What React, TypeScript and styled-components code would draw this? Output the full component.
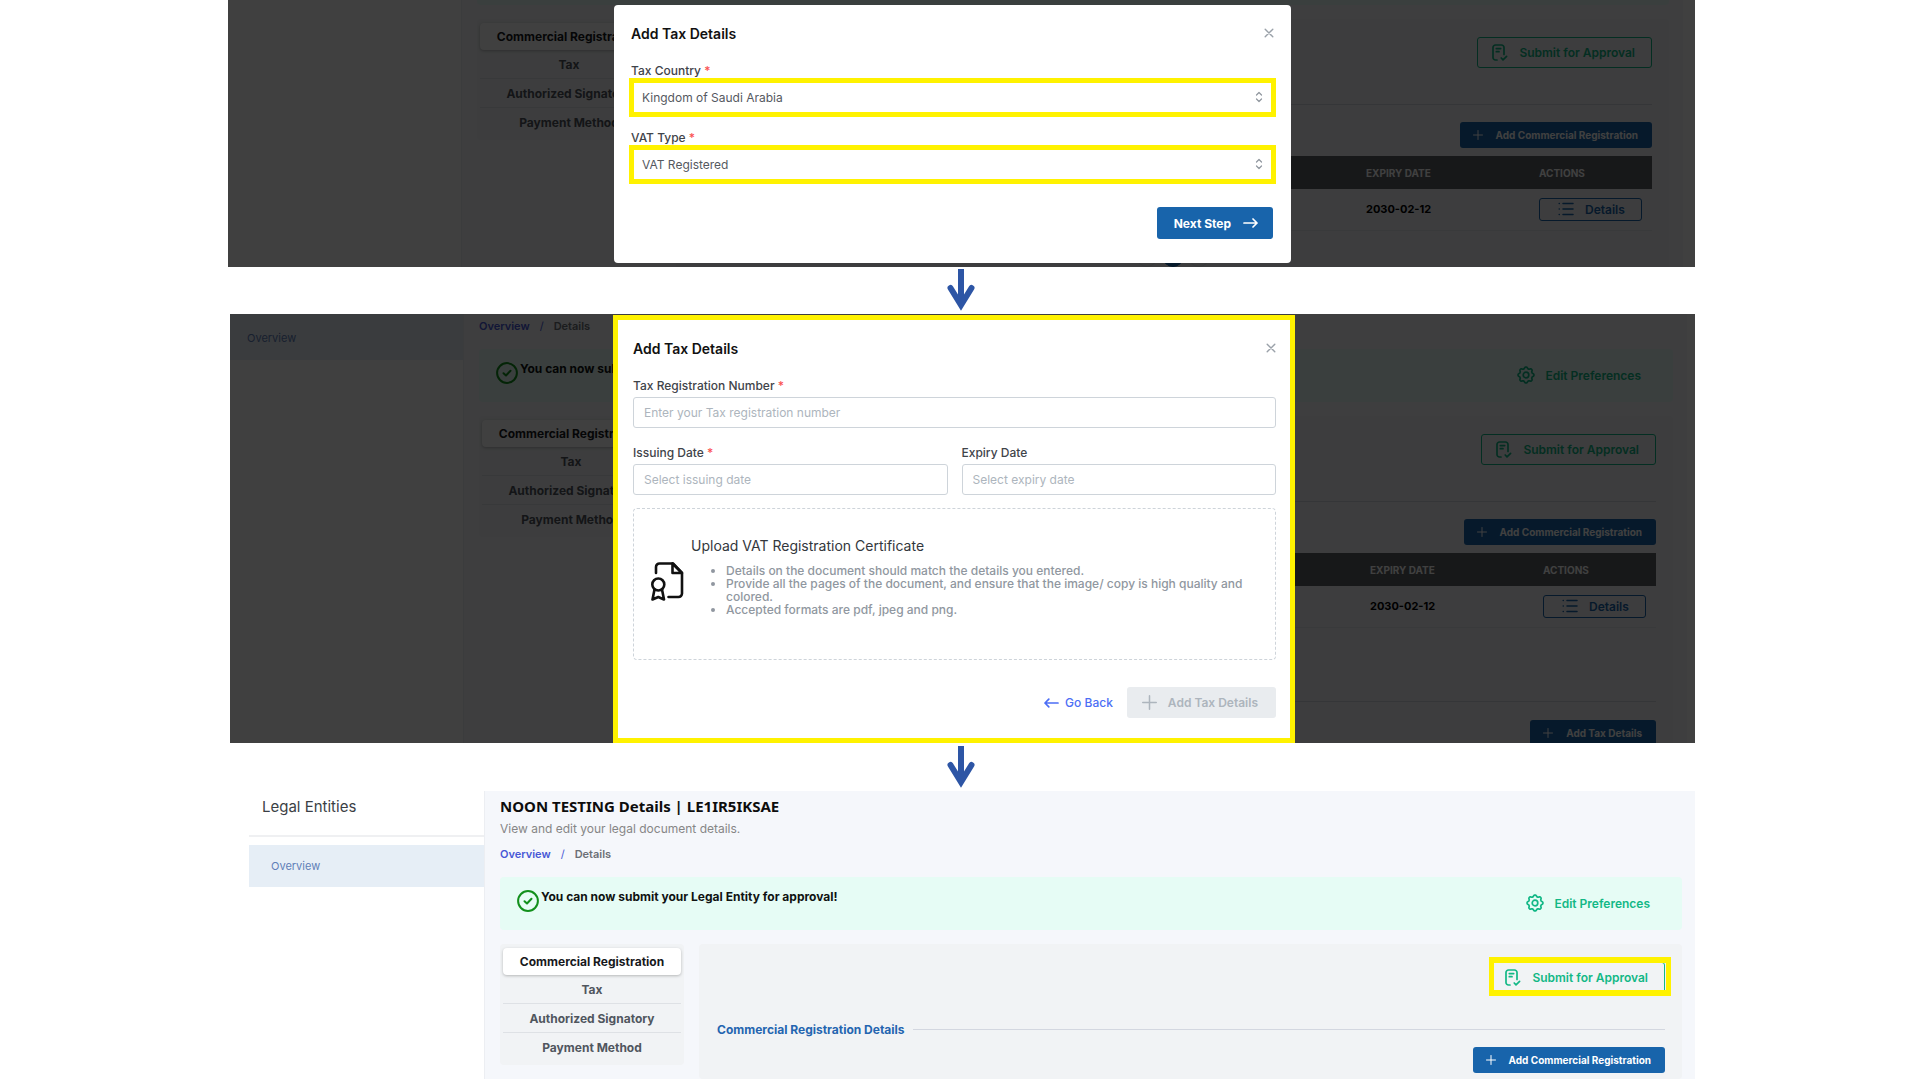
import React from 'react';
import styled, { createGlobalStyle, css } from 'styled-components';

const ink = {
  page: '#f5f7fb',
  card: '#f1f3f5',
  line: '#dfe2e8',
  blue: '#1864ab',
  green: '#12b886',
  mark: '#fff200',
};

const GlobalStyle = createGlobalStyle`
  *, *::before, *::after { box-sizing: border-box; }
  body { margin: 0; background: #fff; font-family: Inter, "Liberation Sans", sans-serif; font-size: 12px; color: #212529; }
  button, input, select { font: inherit; margin: 0; }
  h1, h2, h3, p, ul { margin: 0; }
  svg { display: block; flex: none; }
`;

/* ---------- frame ---------- */

const Guide = styled.main`
  display: flex;
  flex-direction: column;
  min-height: 100vh;
  padding: 0 224px 0 228px;
`;

const Panel = styled.section<{ $indent?: number; $height?: number }>`
  position: relative;
  display: flex;
  overflow: hidden;
  margin-left: ${(p) => p.$indent ?? 0}px;
  ${(p) => (p.$height ? css`height: ${p.$height}px;` : css`flex: 1;`)}
`;

const Step = styled.div<{ $tall?: boolean }>`
  display: flex;
  justify-content: center;
  align-items: flex-end;
  height: ${(p) => (p.$tall ? 48 : 47)}px;
  padding: 0 2px 2px 0;
  flex: none;
`;

/* ---------- sidebar ---------- */

const Sidebar = styled.nav<{ $wide?: boolean }>`
  flex: none;
  width: ${(p) => (p.$wide ? 236 : 234)}px;
  border-right: 1px solid #eceef2;
`;

const SideTitle = styled.h2`
  height: 46px;
  padding: 0 13px;
  border-bottom: 2px solid #eff0f2;
  margin-bottom: 8px;
  font-size: 15px;
  font-weight: 400;
  line-height: 32px;
  color: #3b3f45;
`;

const SideLink = styled.a<{ $tall?: boolean }>`
  display: flex;
  align-items: center;
  height: ${(p) => (p.$tall ? 46 : 42)}px;
  padding: ${(p) => (p.$tall ? '2px 0 0 17px' : '0 0 0 22px')};
  background: #e6eef6;
  color: #5f7fb8;
  font-size: 11px;
  text-decoration: none;
`;

/* ---------- page body ---------- */

const Body = styled.div<{ $top?: number; $right?: number }>`
  flex: 1;
  min-width: 0;
  padding: ${(p) => p.$top ?? 0}px ${(p) => p.$right ?? 14}px 0 15px;
  background: ${ink.page};
`;

const Rail = styled.div<{ $width: number }>`
  flex: none;
  width: ${(p) => p.$width}px;
`;

const PageTitle = styled.h1`
  font-family: "Noto Sans", "Open Sans", sans-serif;
  font-size: 15px;
  font-weight: 700;
  line-height: 22px;
  color: #0d0d0d;
`;

const Lead = styled.p`
  margin: 4px 0 9px;
  line-height: 16px;
  color: #868686;
`;

const Crumbs = styled.nav`
  display: flex;
  gap: 10px;
  margin-bottom: 15px;
  font-size: 11px;
  font-weight: 600;
  line-height: 16px;
  color: #6c6f75;
  a { color: #4757d6; text-decoration: none; }
  i { color: #4757d6; font-style: normal; font-weight: 400; }
`;

const BannerTail = styled.div`
  height: 5px;
  margin-bottom: 14px;
  border-radius: 0 0 4px 4px;
  background: #e6fcf5;
`;

const Banner = styled.div`
  display: flex;
  align-items: flex-start;
  height: 53px;
  padding: 13px 32px 0 17px;
  margin-bottom: 14px;
  border-radius: 4px;
  background: #e6fcf5;
`;

const BannerText = styled.strong`
  margin-left: 2px;
  font-weight: 700;
  line-height: 14px;
  white-space: nowrap;
  color: #101312;
`;

const PlainButton = styled.button`
  display: flex;
  align-items: center;
  gap: 10px;
  height: 26px;
  margin-left: auto;
  padding: 0;
  border: 0;
  background: none;
  font-weight: 600;
  color: ${ink.green};
`;

const Columns = styled.div`
  display: flex;
  align-items: flex-start;
  gap: 15px;
`;

const Tabs = styled.div`
  flex: none;
  width: 184px;
  padding: 4px 3px 3px;
  border-radius: 4px;
  background: ${ink.card};
`;

const Tab = styled.button<{ $active?: boolean; $ruled?: boolean }>`
  display: block;
  width: 100%;
  height: ${(p) => (p.$active ? 27 : 29)}px;
  padding: 0;
  border: 0;
  border-bottom: ${(p) => (p.$ruled ? '1px solid #dee1e5' : '0')};
  border-radius: ${(p) => (p.$active ? 4 : 0)}px;
  background: ${(p) => (p.$active ? '#fff' : 'none')};
  box-shadow: ${(p) => (p.$active ? '0 1px 3px rgba(0,0,0,.25)' : 'none')};
  font-weight: 700;
  color: ${(p) => (p.$active ? '#17191c' : '#50565e')};
`;

const Card = styled.div`
  flex: 1;
  min-width: 0;
  padding: 18px 17px 6px 18px;
  border-radius: 4px;
  background: ${ink.card};
`;

const SubmitRow = styled.div`
  display: flex;
  justify-content: flex-end;
  margin-bottom: 27px;
`;

const Spot = styled.div`
  position: relative;
`;

const Highlight = styled.span`
  position: absolute;
  inset: -5px -6px -3px -1px;
  border: solid ${ink.mark};
  border-width: 6px 5px;
  pointer-events: none;
`;

const SubmitButton = styled.button`
  display: flex;
  align-items: center;
  gap: 11px;
  height: 31px;
  padding: 0 16px 0 14px;
  border: 1px solid ${ink.green};
  border-radius: 3px;
  background: none;
  font-weight: 600;
  color: ${ink.green};
`;

const SectionHead = styled.div`
  display: flex;
  align-items: center;
  gap: 8px;
  height: 18px;
  margin-bottom: 9px;
  &::after { content: ""; flex: 1; height: 1px; background: #d3d7e0; }
`;

const SectionTitle = styled.h3`
  font-size: 12px;
  font-weight: 700;
  color: #2465b0;
`;

const AddButton = styled.button`
  display: flex;
  align-items: center;
  gap: 13px;
  height: 26px;
  margin-left: auto;
  padding: 0 14px 0 13px;
  border: 0;
  border-radius: 3px;
  background: ${ink.blue};
  font-size: 10px;
  font-weight: 700;
  color: #fff;
`;

const Table = styled.table`
  width: 100%;
  margin-top: 8px;
  border-collapse: collapse;
  table-layout: fixed;
  text-align: left;
  th { height: 33px; padding: 0 10px; background: #5c5f66; color: #fff; font-size: 10px; font-weight: 700; }
  td { height: 41px; padding: 0 10px; border-bottom: 1px solid #e4e6ea; font-size: 11px; font-weight: 700; color: #000; }
  th:nth-child(2) { width: 173px; }
  th:nth-child(3) { width: 123px; }
`;

const DetailsButton = styled.button`
  display: flex;
  align-items: center;
  gap: 11px;
  width: 100%;
  height: 23px;
  padding: 0 0 0 18px;
  border: 1px solid ${ink.blue};
  border-radius: 3px;
  background: none;
  font-size: 12px;
  font-weight: 600;
  color: ${ink.blue};
`;

const Pager = styled.div`
  display: flex;
  justify-content: center;
  gap: 4px;
  margin: 14px 0 29px;
`;

const PagerDot = styled.button<{ $on?: boolean }>`
  width: 22px;
  height: 22px;
  padding: 0;
  border: 1px solid ${(p) => (p.$on ? ink.blue : ink.line)};
  border-radius: 50%;
  background: ${(p) => (p.$on ? ink.blue : 'none')};
`;

/* ---------- dialogs ---------- */

const Shade = styled.div<{ $top: number; $right: number }>`
  position: absolute;
  inset: 0;
  display: flex;
  justify-content: center;
  align-items: flex-start;
  padding: ${(p) => p.$top}px ${(p) => p.$right}px 0 0;
  background: rgba(0, 0, 0, 0.75);
`;

const Dialog = styled.form<{ $marked?: boolean }>`
  width: ${(p) => (p.$marked ? 682 : 677)}px;
  padding: ${(p) => (p.$marked ? '18px 14px 20px 15px' : '18px 15px 24px')};
  border: ${(p) => (p.$marked ? `5px solid ${ink.mark}` : '0')};
  border-radius: ${(p) => (p.$marked ? 0 : 4)}px;
  background: #fff;
`;

const DialogHead = styled.header<{ $inset?: boolean }>`
  display: flex;
  justify-content: space-between;
  align-items: center;
  height: 20px;
  margin-bottom: 19px;
  padding: 0 ${(p) => (p.$inset ? 2 : 0)}px;
  h2 { font-size: 14px; font-weight: 600; color: #111; }
`;

const CloseButton = styled.button`
  padding: 0;
  border: 0;
  background: none;
  color: #9aa1a9;
`;

const Field = styled.div<{ $gap?: number }>`
  flex: 1;
  margin-bottom: ${(p) => p.$gap ?? 0}px;
`;

const Label = styled.label<{ $inset?: boolean }>`
  display: block;
  height: ${(p) => (p.$inset ? 16 : 20)}px;
  padding: ${(p) => (p.$inset ? '0 2px' : '0')};
  font-weight: 500;
  line-height: 18px;
  color: #3f444a;
  span { color: #fa5252; }
`;

const Picker = styled.div`
  position: relative;
  svg { position: absolute; right: 13px; top: 12px; pointer-events: none; }
`;

const Select = styled.select`
  appearance: none;
  display: block;
  width: 100%;
  height: 39px;
  padding: 0 8px;
  border: 5px solid ${ink.mark};
  border-radius: 0;
  background: #fff;
  color: #55595f;
`;

const Input = styled.input`
  display: block;
  width: 100%;
  height: 31px;
  padding: 0 10px;
  border: 1px solid #ced4da;
  border-radius: 3px;
  background: #fff;
  &::placeholder { color: #adb5bd; opacity: 1; }
`;

const FieldRow = styled.div`
  display: flex;
  gap: 14px;
  margin: 16px 0 13px;
`;

const Drop = styled.div`
  display: flex;
  gap: 7px;
  height: 152px;
  padding: 28px 17px;
  border: 1px dashed #ced4da;
  border-radius: 4px;
  > svg { margin-top: 25px; }
`;

const DropTitle = styled.h3`
  font-size: 14px;
  font-weight: 400;
  line-height: 18px;
  color: #33373c;
`;

const Notes = styled.ul`
  margin-top: 9px;
  padding-left: 35px;
  font-weight: 500;
  line-height: 13px;
  color: #9097a0;
`;

const Footer = styled.footer<{ $inset?: boolean }>`
  display: flex;
  justify-content: flex-end;
  gap: 14px;
  margin-top: ${(p) => (p.$inset ? 23 : 27)}px;
  padding: 0 ${(p) => (p.$inset ? 3 : 0)}px;
`;

const NextButton = styled.button`
  display: flex;
  align-items: center;
  gap: 12px;
  height: 32px;
  padding: 0 15px 0 17px;
  border: 0;
  border-radius: 3px;
  background: ${ink.blue};
  font-weight: 700;
  color: #fff;
`;

const BackButton = styled.button`
  display: flex;
  align-items: center;
  gap: 6px;
  padding: 0;
  border: 0;
  background: none;
  font-weight: 500;
  color: #4c6ef5;
`;

const IdleButton = styled.button`
  display: flex;
  align-items: center;
  gap: 11px;
  height: 31px;
  padding: 0 18px 0 15px;
  border: 0;
  border-radius: 3px;
  background: #e9ecef;
  font-weight: 600;
  color: #adb5bd;
`;

/* ---------- icons ---------- */

const stroke = { fill: 'none', stroke: 'currentColor', strokeLinecap: 'round', strokeLinejoin: 'round' } as const;

const DownArrow = () => (
  <svg width="28" height="43" viewBox="0 0 28 43" fill="none" stroke="#2d55a5">
    <path d="M14 0V34" strokeWidth="6" />
    <path d="M3.500 19L14 36L24.500 19" strokeWidth="6" strokeLinecap="round" strokeLinejoin="miter" />
  </svg>
);

const CheckRing = () => (
  <svg width="22" height="22" viewBox="0 0 22 22" {...stroke} stroke="#12901c">
    <circle cx="11" cy="11" r="9.900" strokeWidth="2" />
    <path d="M7.500 11.200L10 13.500L14.500 8.700" strokeWidth="2" />
  </svg>
);

const gearPath = (() => {
  const pts: string[] = [];
  for (let i = 0; i < 72; i++) {
    const a = (i / 72) * Math.PI * 2;
    const r = 7.2 + 0.75 * Math.tanh(2 * Math.cos(8 * a));
    pts.push(`${(9 + r * Math.cos(a)).toFixed(2)} ${(9 + r * Math.sin(a)).toFixed(2)}`);
  }
  return `M${pts.join('L')}Z`;
})();

const Gear = () => (
  <svg width="18" height="18" viewBox="0 0 18 18" {...stroke} strokeWidth="1.700">
    <path d={gearPath} />
    <circle cx="9" cy="9" r="2.800" />
  </svg>
);

const DocCheck = () => (
  <svg width="16" height="17" viewBox="0 0 16 17" {...stroke} strokeWidth="1.700">
    <path d="M5 16H3.500A2.500 2.500 0 0 1 1 13.500V3.500A2.500 2.500 0 0 1 3.500 1H9.500A2.500 2.500 0 0 1 12 3.500V10.500" />
    <path d="M4.300 4.600H8.700M4.300 7.700H7" />
    <path d="M9.200 14L11 15.800L14.600 12.300" />
  </svg>
);

const Plus = ({ size }: { size: number }) => (
  <svg width={size} height={size} viewBox="0 0 10 10" {...stroke} strokeWidth="1">
    <path d="M5 .5V9.500M.5 5H9.500" />
  </svg>
);

const Cross = () => (
  <svg width="10" height="10" viewBox="0 0 10 10" {...stroke} strokeWidth="1.400">
    <path d="M1.200 1.200L8.800 8.800M8.800 1.200L1.200 8.800" />
  </svg>
);

const UpDown = () => (
  <svg width="8" height="14" viewBox="0 0 8 14" {...stroke} stroke="#8f969e" strokeWidth="1.200">
    <path d="M1.500 5L4 2.500L6.500 5M1.500 9L4 11.500L6.500 9" />
  </svg>
);

const ArrowRight = () => (
  <svg width="15" height="10" viewBox="0 0 15 10" {...stroke} strokeWidth="1.700">
    <path d="M1 5H14M10 1L14 5L10 9" />
  </svg>
);

const ArrowLeft = () => (
  <svg width="15" height="10" viewBox="0 0 15 10" {...stroke} strokeWidth="1.700">
    <path d="M14 5H1M4.800 1.200L1 5L4.800 8.800" />
  </svg>
);

const ListIcon = () => (
  <svg width="16" height="14" viewBox="0 0 16 14" {...stroke} strokeWidth="1.500">
    <path d="M5 1.500H15M5 7H15M5 12.500H15M1.200 1.500H1.300M1.200 7H1.300M1.200 12.500H1.300" />
  </svg>
);

const Certificate = () => (
  <svg width="33" height="39" viewBox="0 0 33 39" {...stroke} stroke="#111" strokeWidth="2.600">
    <path d="M5 11V5A3.500 3.500 0 0 1 8.500 1.500H22L31 11V31.500A3.500 3.500 0 0 1 27.500 35H17.500" />
    <path d="M21.500 1.500V11H31Z" />
    <circle cx="7.300" cy="22.500" r="6" />
    <path d="M3.500 27.500L1.500 37.500L7.300 35L13 37.500L11 27.500" />
  </svg>
);

/* ---------- shared sections ---------- */

const SideNav = ({ titled, tall }: { titled?: boolean; tall?: boolean }) => (
  <Sidebar aria-label="Legal entity" $wide={titled}>
    {titled && <SideTitle>Legal Entities</SideTitle>}
    <SideLink href="#overview" $tall={tall}>Overview</SideLink>
  </Sidebar>
);

const Breadcrumbs = () => (
  <Crumbs aria-label="Breadcrumb">
    <a href="#overview">Overview</a>
    <i>/</i>
    <span>Details</span>
  </Crumbs>
);

const Notice = () => (
  <Banner>
    <CheckRing />
    <BannerText>You can now submit your Legal Entity for approval!</BannerText>
    <PlainButton type="button"><Gear />Edit Preferences</PlainButton>
  </Banner>
);

const EntityTabs = () => (
  <Tabs>
    <Tab type="button" $active>Commercial Registration</Tab>
    <Tab type="button" $ruled>Tax</Tab>
    <Tab type="button" $ruled>Authorized Signatory</Tab>
    <Tab type="button">Payment Method</Tab>
  </Tabs>
);

const Registration = ({ marked, table, tax }: { marked?: boolean; table?: boolean; tax?: boolean }) => (
  <Card>
    <SubmitRow>
      <Spot>
        <SubmitButton type="button"><DocCheck />Submit for Approval</SubmitButton>
        {marked && <Highlight />}
      </Spot>
    </SubmitRow>
    <SectionHead><SectionTitle>Commercial Registration Details</SectionTitle></SectionHead>
    <AddButton type="button"><Plus size={10} />Add Commercial Registration</AddButton>
    {table && (
      <>
        <Table>
          <thead>
            <tr><th /><th>EXPIRY DATE</th><th>ACTIONS</th></tr>
          </thead>
          <tbody>
            <tr>
              <td />
              <td>2030-02-12</td>
              <td><DetailsButton type="button"><ListIcon />Details</DetailsButton></td>
            </tr>
          </tbody>
        </Table>
        <Pager>
          <PagerDot type="button" aria-label="Previous" />
          <PagerDot type="button" aria-label="Current" $on />
          <PagerDot type="button" aria-label="Next" />
        </Pager>
      </>
    )}
    {tax && (
      <>
        <SectionHead />
        <AddButton type="button"><Plus size={10} />Add Tax Details</AddButton>
      </>
    )}
  </Card>
);

const DialogTitle = ({ inset }: { inset?: boolean }) => (
  <DialogHead $inset={inset}>
    <h2>Add Tax Details</h2>
    <CloseButton type="button" aria-label="Close"><Cross /></CloseButton>
  </DialogHead>
);

const PickField = ({ id, label, value, gap }: { id: string; label: string; value: string; gap?: number }) => (
  <Field $gap={gap}>
    <Label htmlFor={id} $inset>{label} <span>*</span></Label>
    <Picker>
      <Select id={id} defaultValue={value}><option>{value}</option></Select>
      <UpDown />
    </Picker>
  </Field>
);

const TextField = ({ id, label, hint, required }: { id: string; label: string; hint: string; required?: boolean }) => (
  <Field>
    <Label htmlFor={id}>{label} {required && <span>*</span>}</Label>
    <Input id={id} placeholder={hint} />
  </Field>
);

export default function App() {
  return (
    <>
      <GlobalStyle />
      <Guide>
        <Panel $height={267}>
          <Sidebar />
          <Body>
            <BannerTail />
            <Columns><EntityTabs /><Registration table /></Columns>
          </Body>
          <Rail $width={12} />
          <Shade $top={5} $right={18}>
            <Dialog>
              <DialogTitle inset />
              <PickField id="country" label="Tax Country" value="Kingdom of Saudi Arabia" gap={12} />
              <PickField id="vat" label="VAT Type" value="VAT Registered" />
              <Footer $inset>
                <NextButton type="button">Next Step<ArrowRight /></NextButton>
              </Footer>
            </Dialog>
          </Shade>
        </Panel>

        <Step><DownArrow /></Step>

        <Panel $indent={2} $height={429}>
          <SideNav tall />
          <Body $top={4}>
            <Breadcrumbs />
            <Notice />
            <Columns><EntityTabs /><Registration table tax /></Columns>
          </Body>
          <Rail $width={8} />
          <Shade $top={1} $right={17}>
            <Dialog $marked>
              <DialogTitle />
              <TextField id="trn" label="Tax Registration Number" hint="Enter your Tax registration number" required />
              <FieldRow>
                <TextField id="issued" label="Issuing Date" hint="Select issuing date" required />
                <TextField id="expires" label="Expiry Date" hint="Select expiry date" />
              </FieldRow>
              <Drop>
                <Certificate />
                <div>
                  <DropTitle>Upload VAT Registration Certificate</DropTitle>
                  <Notes>
                    <li>Details on the document should match the details you entered.</li>
                    <li>Provide all the pages of the document, and ensure that the image/ copy is high quality and colored.</li>
                    <li>Accepted formats are pdf, jpeg and png.</li>
                  </Notes>
                </div>
              </Drop>
              <Footer>
                <BackButton type="button"><ArrowLeft />Go Back</BackButton>
                <IdleButton type="button" disabled><Plus size={15} />Add Tax Details</IdleButton>
              </Footer>
            </Dialog>
          </Shade>
        </Panel>

        <Step $tall><DownArrow /></Step>

        <Panel $indent={21}>
          <SideNav titled />
          <Body $top={4} $right={13}>
            <PageTitle>NOON TESTING Details | LE1IR5IKSAE</PageTitle>
            <Lead>View and edit your legal document details.</Lead>
            <Breadcrumbs />
            <Notice />
            <Columns><EntityTabs /><Registration marked /></Columns>
          </Body>
        </Panel>
      </Guide>
    </>
  );
}
